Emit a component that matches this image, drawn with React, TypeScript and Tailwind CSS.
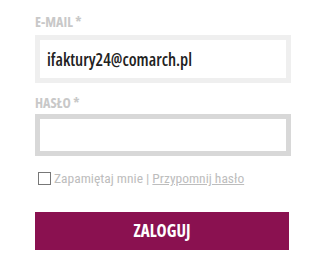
import React from 'react';

const condensed = { fontFamily: '"Open Sans", sans-serif' };

export default function App() {
  return (
    <main className="min-h-screen bg-white">
      <form className="w-[256px] ml-[35px] pt-[12px] flex flex-col" onSubmit={(e) => e.preventDefault()}>
        <label
          className="text-[14px] leading-[20px] font-bold font-stretch-[75%] text-[#c8c8c8] uppercase"
          style={condensed}
        >
          E-mail *
        </label>
        <input
          type="text"
          defaultValue="ifaktury24@comarch.pl"
          className="mt-[3px] h-[48px] border-[5px] border-[#efefef] bg-white px-[7px] text-[17px] font-semibold font-stretch-[75%] text-[#222] outline-none"
          style={condensed}
        />
        <label
          className="mt-[10px] text-[14px] leading-[20px] font-bold font-stretch-[75%] text-[#c8c8c8]"
          style={condensed}
        >
          HASŁO *
        </label>
        <input
          type="password"
          className="mt-[1px] h-[42px] border-[5px] border-[#d8d8d8] bg-white px-[7px] outline-none"
        />
        <div
          className="mt-[14px] h-[16px] flex items-center text-[13.5px] leading-[16px] text-[#bdbdbd] font-stretch-[75%]"
          style={{ fontFamily: '"Liberation Sans Narrow", "Arial Narrow", Roboto, sans-serif' }}
        >
          <input type="checkbox" className="ml-[3px] mr-[3px] size-[13px] appearance-none border border-[#777] bg-white" />
          <span>Zapamiętaj mnie | </span>
          <a href="#" className="ml-[3px] underline">
            Przypomnij hasło
          </a>
        </div>
        <button
          type="submit"
          className="mt-[26px] w-[254px] h-[38px] bg-[#8a1150] text-white text-[17px] font-bold font-stretch-[75%] uppercase"
          style={condensed}
        >
          Zaloguj
        </button>
      </form>
    </main>
  );
}
